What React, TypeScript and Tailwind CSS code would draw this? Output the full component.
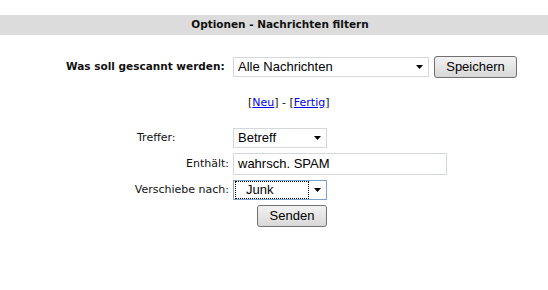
function Arrow() {
  return (
    <svg width="7" height="4" viewBox="0 0 7 4" className="shrink-0">
      <path d="M0 0h7L3.5 4z" fill="#000" />
    </svg>
  );
}

function FakeSelect({ value, width, focused }: { value: string; width: string; focused?: boolean }) {
  return (
    <div
      className={`${width} h-[20px] flex items-center justify-between bg-white border ${
        focused ? "border-[#7da2ce]" : "border-[#d4d8dc]"
      } pr-[5px]`}
    >
      <div
        className={`flex-1 h-full flex items-center pl-[4px] ${
          focused ? "border border-dotted border-black m-[1px] mr-[5px] pl-[10px]" : ""
        }`}
      >
        <span className="text-[13px] text-black font-['Liberation_Sans',sans-serif]">{value}</span>
      </div>
      <Arrow />
    </div>
  );
}

function Button({ label, width }: { label: string; width: string }) {
  return (
    <div
      className={`${width} h-[22px] flex items-center justify-center rounded-[3px] border border-[#707070] bg-gradient-to-b from-[#f2f2f2] to-[#d8d8d8] text-[13px] text-black font-['Liberation_Sans',sans-serif]`}
    >
      {label}
    </div>
  );
}

export default function App() {
  return (
    <div className="w-[548px] h-[290px] overflow-hidden bg-white text-[#111] font-['DejaVu_Sans',sans-serif] text-[11px]">
      <div className="mt-[15px] h-[20px] bg-[#dcdcdc] flex items-center justify-center pl-[12px] font-bold text-[10.5px]">
        Optionen - Nachrichten filtern
      </div>

      <div className="mt-[21px] flex items-center pl-[66px]">
        <span className="w-[164px] font-bold text-[10.5px] whitespace-nowrap">Was soll gescannt werden:</span>
        <div className="ml-[3px]">
          <FakeSelect value="Alle Nachrichten" width="w-[196px]" />
        </div>
        <div className="ml-[5px]">
          <Button label="Speichern" width="w-[83px]" />
        </div>
      </div>

      <div className="mt-[18px] pl-[248px] h-[14px] flex items-center whitespace-pre">
        [<a className="text-[#0000ee] underline" href="#">Neu</a>] - [<a className="text-[#0000ee] underline" href="#">Fertig</a>]
      </div>

      <div className="mt-[18px] grid grid-cols-[99px_auto] gap-y-[5px] pl-[134px]">
        <span className="self-center pl-[3px] whitespace-nowrap">Treffer:</span>
        <FakeSelect value="Betreff" width="w-[94px]" />

        <span className="self-center text-right pr-[4px] whitespace-nowrap">Enthält:</span>
        <div className="w-[214px] h-[22px] flex items-center border border-[#d4d8dc] pl-[4px] text-[13px] text-black font-['Liberation_Sans',sans-serif]">
          wahrsch. SPAM
        </div>

        <span className="self-center text-right pr-[4px] whitespace-nowrap">Verschiebe nach:</span>
        <FakeSelect value="Junk" width="w-[94px]" focused />

        <span />
        <div className="pl-[24px]">
          <Button label="Senden" width="w-[70px]" />
        </div>
      </div>
    </div>
  );
}
